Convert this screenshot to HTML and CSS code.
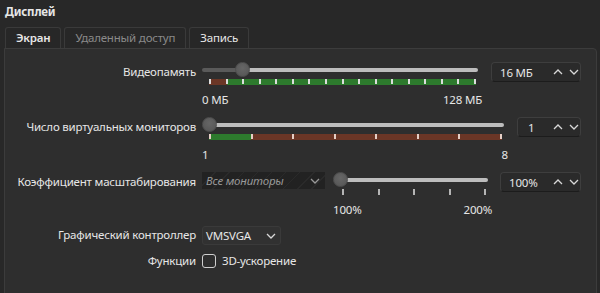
FILE: index.html
```html
<!DOCTYPE html>
<html>
<head>
    <title>Дисплей</title>
    <link rel="stylesheet" href="styles.css">
</head>
<body>

<div class="group">
    <div class="title">Дисплей</div>
    <div class="tabs">
        <div class="tab active">Экран</div>
        <div class="tab muted">Удаленный доступ</div>
        <div class="tab">Запись</div>
    </div>

    <div class="panel">
        <!-- video memory -->
        <div class="row row-slider">
            <div class="label">Видеопамять</div>
            <div class="slider">
                <div class="line">
                    <div class="fill fill-mem"></div>
                    <div class="thumb"></div>
                    <div class="rest"></div>
                </div>
                <div class="scale scale-mem">
                    <i></i><i></i><i></i><i></i><i></i><i></i><i></i><i></i><i></i>
                    <i></i><i></i><i></i><i></i><i></i><i></i><i></i><i></i>
                </div>
                <div class="ends"><span>0 МБ</span><span>128 МБ</span></div>
            </div>
            <div class="spin spin-mem">
                <span class="value">16 МБ</span>
                <svg width="10" height="6" viewBox="0 0 10 6"><path d="M1 5 L5 1 L9 5" /></svg>
                <svg width="10" height="6" viewBox="0 0 10 6"><path d="M1 1 L5 5 L9 1" /></svg>
            </div>
        </div>

        <!-- monitors -->
        <div class="row row-slider">
            <div class="label">Число виртуальных мониторов</div>
            <div class="slider">
                <div class="line">
                    <div class="thumb"></div>
                    <div class="rest"></div>
                </div>
                <div class="scale scale-mon">
                    <i></i><i></i><i></i><i></i><i></i><i></i><i></i><i></i>
                </div>
                <div class="ends"><span>1</span><span>8</span></div>
            </div>
            <div class="spin spin-mon">
                <span class="value">1</span>
                <svg width="10" height="6" viewBox="0 0 10 6"><path d="M1 5 L5 1 L9 5" /></svg>
                <svg width="10" height="6" viewBox="0 0 10 6"><path d="M1 1 L5 5 L9 1" /></svg>
            </div>
        </div>

        <!-- scale factor -->
        <div class="row row-scale">
            <div class="label">Коэффициент масштабирования</div>
            <div class="combo combo-off">
                <span>Все мониторы</span>
                <svg width="10" height="6" viewBox="0 0 10 6"><path d="M1 1 L5 5 L9 1" /></svg>
            </div>
            <div class="slider">
                <div class="line">
                    <div class="thumb"></div>
                    <div class="rest"></div>
                </div>
                <div class="scale scale-factor">
                    <i></i><i></i><i></i><i></i><i></i>
                </div>
                <div class="ends"><span>100%</span><span>200%</span></div>
            </div>
            <div class="spin spin-factor">
                <span class="value">100%</span>
                <svg width="10" height="6" viewBox="0 0 10 6"><path d="M1 5 L5 1 L9 5" /></svg>
                <svg width="10" height="6" viewBox="0 0 10 6"><path d="M1 1 L5 5 L9 1" /></svg>
            </div>
        </div>

        <!-- controller -->
        <div class="row row-ctrl">
            <div class="label">Графический контроллер</div>
            <div class="combo combo-ctrl">
                <span>VMSVGA</span>
                <svg width="10" height="6" viewBox="0 0 10 6"><path d="M1 1 L5 5 L9 1" /></svg>
            </div>
        </div>

        <!-- features -->
        <div class="row row-feat">
            <div class="label">Функции</div>
            <div class="check"></div>
            <span class="check-text">3D-ускорение</span>
        </div>
    </div>
</div>

</body>
</html>
```

FILE: styles.css
```css
body {
    margin: 0;
    background: #282828;
    font-family: "Noto Sans", "Open Sans", sans-serif;
    font-size: 11.5px;
    letter-spacing: -0.2px;
    color: #e6e6e6;
    overflow: hidden;
}
.group {
    padding: 4px 3px 0 4px;
}
.title {
    font-weight: bold;
    line-height: 16px;
    height: 23px;
    padding-left: 1px;
    box-sizing: border-box;
}
.tabs {
    display: flex;
    gap: 3px;
    padding-left: 1px;
}
.tab {
    height: 21px;
    box-sizing: border-box;
    line-height: 20px;
    padding: 0 10px;
    border: 1px solid #3a3a3a;
    border-bottom: 0;
    border-radius: 3px 3px 0 0;
    background: #272727;
}
.tab.active {
    font-weight: 600;
}
.tab.muted {
    color: #8a8a8a;
}
.panel {
    height: 260px;
    box-sizing: border-box;
    border: 1px solid #3c3c3c;
    border-radius: 0 4px 0 0;
    background: #2e2e2e;
    padding: 13px 15px 0 0;
}
.row {
    display: flex;
    align-items: flex-start;
}
.row-slider {
    height: 55px;
}
.row-scale {
    height: 54px;
}
.row-ctrl {
    height: 27px;
}
.label {
    width: 191px;
    flex: none;
    text-align: right;
    line-height: 16px;
    padding-top: 2px;
    margin-right: 6px;
    white-space: nowrap;
}
.row-ctrl .label {
    padding-top: 1px;
}
.row-feat .label {
    padding-top: 0;
}

/* sliders */
.slider {
    flex: 1;
}
.line {
    display: flex;
    align-items: center;
    height: 15px;
    margin-right: 4px;
}
.fill {
    height: 4px;
    background: #5a5a5a;
    border-radius: 2px 0 0 2px;
    margin-right: -2px;
}
.fill-mem {
    width: 35px;
}
.thumb {
    width: 15px;
    height: 15px;
    flex: none;
    box-sizing: border-box;
    border-radius: 50%;
    border: 1px solid #4e4e4e;
    background: radial-gradient(circle at 50% 40%, #666, #545454);
    position: relative;
    z-index: 1;
}
.rest {
    flex: 1;
    height: 4px;
    background: #bdbdbd;
    border-radius: 0 2px 2px 0;
    margin-left: -2px;
}
.scale {
    display: flex;
    justify-content: space-between;
    height: 6px;
    margin: 2px 6px 0 7px;
}
.scale i {
    width: 2px;
    height: 5px;
    background: #ddd;
}
.scale-mem {
    background: linear-gradient(to right, #6b3626 18px, #2d7a2d 18px);
}
.scale-mon {
    background: linear-gradient(to right, #2d7a2d 42px, #6b3626 42px);
}
.scale-mon i {
    background: #e6cfc6;
}
.scale-factor {
    margin-left: 9px;
}
.scale-factor i {
    height: 6px;
    background: #b5b5b5;
}
.ends {
    display: flex;
    justify-content: space-between;
    margin-top: 7px;
    line-height: 16px;
}

/* spin boxes */
.spin {
    flex: none;
    display: flex;
    align-items: center;
    gap: 6px;
    height: 20px;
    box-sizing: border-box;
    margin-left: 9px;
    padding: 0 1px 0 8px;
    border: 1px solid #3e3e3e;
    border-bottom-color: #1c1c1c;
    border-radius: 4px;
    background: #2a2a2a;
}
.spin .value {
    flex: 1;
}
.spin-mem {
    width: 90px;
}
.spin-mon {
    width: 64px;
    padding-left: 10px;
}
.spin-factor {
    width: 81px;
    margin-left: 8px;
}
svg path {
    fill: none;
    stroke: #d8d8d8;
    stroke-width: 1.3;
}

/* combos */
.combo {
    flex: none;
    display: flex;
    align-items: center;
    justify-content: space-between;
    box-sizing: border-box;
}
.combo-off {
    width: 123px;
    height: 17px;
    margin-right: 8px;
    padding: 0 5px 0 4px;
    font-style: italic;
    color: #999;
    background: repeating-linear-gradient(135deg, #222 0 9px, #2a2a2a 9px 10px);
}
.combo-off svg path {
    stroke: #999;
}
.combo-ctrl {
    width: 79px;
    height: 19px;
    padding: 0 4px 0 3px;
    border: 1px solid #3a3a3a;
    border-radius: 3px;
    background: #313131;
}

/* checkbox */
.check {
    width: 14px;
    height: 14px;
    box-sizing: border-box;
    margin-top: 1px;
    border: 1.5px solid #cfcfcf;
    border-radius: 3px;
}
.check-text {
    margin-left: 6px;
    line-height: 16px;
}
```
